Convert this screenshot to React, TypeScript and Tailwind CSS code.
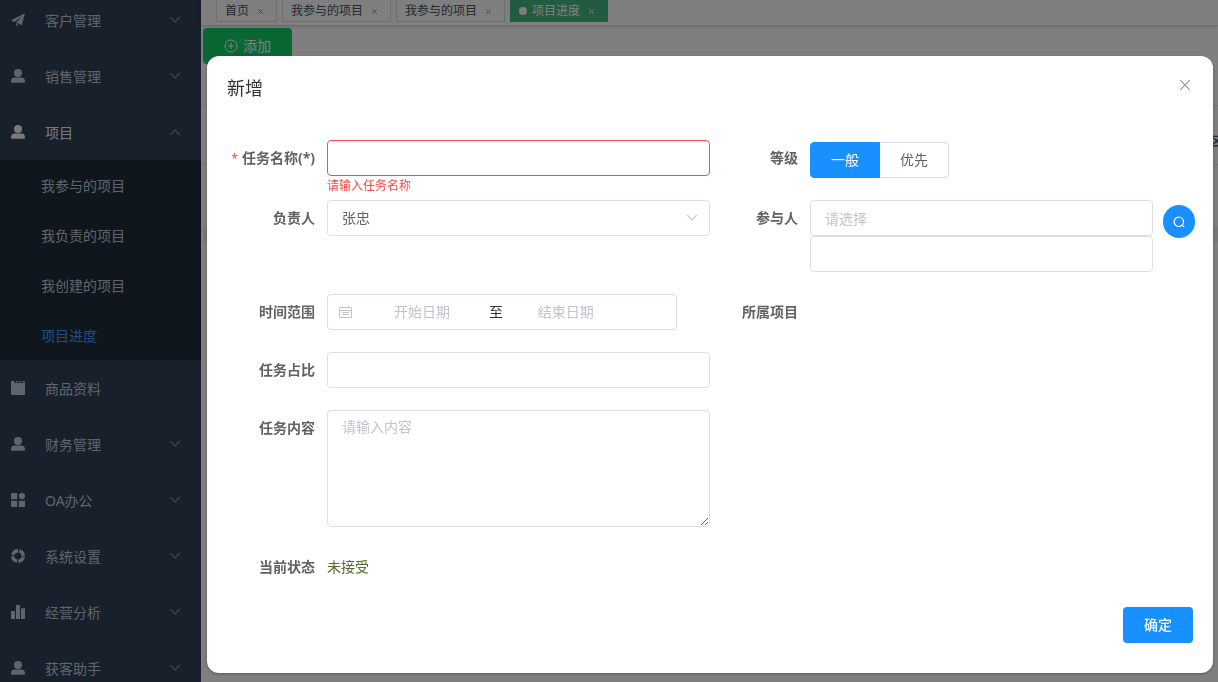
import React, { useState } from 'react';
import clsx from 'clsx';

type IconName = 'promotion' | 'user' | 'goods' | 'menu' | 'help' | 'data';

interface MenuItem {
  label: string;
  icon: IconName;
  leaf?: boolean;
  children?: string[];
}

const menu: MenuItem[] = [
  { label: '客户管理', icon: 'promotion' },
  { label: '销售管理', icon: 'user' },
  { label: '项目', icon: 'user', children: ['我参与的项目', '我负责的项目', '我创建的项目', '项目进度'] },
  { label: '商品资料', icon: 'goods', leaf: true },
  { label: '财务管理', icon: 'user' },
  { label: 'OA办公', icon: 'menu' },
  { label: '系统设置', icon: 'help' },
  { label: '经营分析', icon: 'data' },
  { label: '获客助手', icon: 'user' },
];

const tabs = ['首页', '我参与的项目', '我参与的项目', '项目进度'];

const MenuIcon: React.FC<{ name: IconName }> = ({ name }) => (
  <svg viewBox="0 0 14 14" className="h-3.5 w-3.5 shrink-0" fill="currentColor" aria-hidden="true">
    {name === 'promotion' && (
      <path d="M14 .2 0 7.3l3.6 1.600L11.3 3 5.200 9.600v.1l5.600 2.400L14 .2ZM5.200 10.400v3.100l1.900-2.300-1.900-.8Z" />
    )}
    {name === 'user' && (
      <>
        <circle cx="7" cy="4" r="4" />
        <path d="M3.800 8.600h6.400A3.800 3.800 0 0 1 14 12.400v.4c0 .6-.4 1-1 1H1c-.6 0-1-.4-1-1v-.4a3.800 3.800 0 0 1 3.800-3.800Z" />
      </>
    )}
    {name === 'goods' && (
      <path d="M0 0h3.600v2H14v12H0V0Zm5 0h2v1.200H5V0Zm3.200 0h2v1.200h-2V0Zm3.200 0H14v1.200h-2.600V0Z" />
    )}
    {name === 'menu' && (
      <>
        <rect x="0" y="0" width="6.2" height="6.2" />
        <circle cx="10.9" cy="3.1" r="3.1" />
        <rect x="0" y="7.8" width="6.2" height="6.2" />
        <rect x="7.8" y="7.8" width="6.2" height="6.2" />
      </>
    )}
    {name === 'help' && (
      <circle
        cx="7"
        cy="7"
        r="5.2"
        fill="none"
        stroke="currentColor"
        strokeWidth="3.4"
        strokeDasharray="6.9 1.268"
        strokeDashoffset="-0.634"
      />
    )}
    {name === 'data' && <path d="M0 6h4v8H0V6Zm5-6h4v14H5V0Zm5 3.200h4V14h-4V3.200Z" />}
  </svg>
);

const Chevron: React.FC<{ up?: boolean; className?: string }> = ({ up, className }) => (
  <svg
    viewBox="0 0 12 12"
    className={clsx('h-3 w-3 shrink-0', up && 'rotate-180', className)}
    fill="none"
    stroke="currentColor"
    strokeWidth="1.2"
    aria-hidden="true"
  >
    <path d="m1.300 3.200 4.700 4.700 4.700-4.700" />
  </svg>
);

const Sidebar: React.FC = () => (
  <nav className="w-[201px] shrink-0 overflow-hidden bg-[#304156] text-sm text-[#bfcbd9]">
    {/* the list is scrolled down a little */}
    <ul className="-mt-2">
      {menu.map((item) => (
        <li key={item.label}>
          <button
            type="button"
            className={clsx('flex h-14 w-full items-center pr-5 pl-[11px] text-left', item.children && 'text-[#f4f4f5]')}
          >
            <MenuIcon name={item.icon} />
            <span className="ml-5 flex-1 pt-px">{item.label}</span>
            {!item.leaf && <Chevron up={!!item.children} className="text-[#909399]" />}
          </button>
          {item.children && (
            <ul className="bg-[#1f2d3d]">
              {item.children.map((child) => (
                <li key={child}>
                  <a
                    href="#"
                    className={clsx('flex h-[50px] items-center pt-px pl-[41px]', child === '项目进度' && 'text-[#409eff]')}
                  >
                    {child}
                  </a>
                </li>
              ))}
            </ul>
          )}
        </li>
      ))}
    </ul>
  </nav>
);

const TabBar: React.FC = () => (
  <div className="flex h-[26px] items-start gap-[5px] overflow-hidden border-b border-[#d8dce5] pl-[15px] text-xs shadow">
    {tabs.map((tab, idx) => {
      const active = idx === tabs.length - 1;
      return (
        <div
          key={idx}
          className={clsx(
            'flex h-[22px] shrink-0 items-center border border-t-0 px-2',
            active ? 'border-[#42b983] bg-[#42b983] text-white' : 'border-[#d8dce5] text-[#495060]'
          )}
        >
          {active && <span className="mr-[5px] h-2 w-2 rounded-full bg-white" />}
          <a href="#">{tab}</a>
          <button
            type="button"
            aria-label="关闭标签"
            className={clsx('ml-1 flex w-[15px] justify-center pt-px', !active && 'text-[#909399]')}
          >
            <svg viewBox="0 0 5 5" className="h-[5px] w-[5px]" fill="none" stroke="currentColor" aria-hidden="true">
              <path d="m.3.3 4.400 4.400m0-4.400L.3 4.700" />
            </svg>
          </button>
        </div>
      );
    })}
  </div>
);

interface FormItemProps {
  label: string;
  htmlFor?: string;
  required?: boolean;
  children?: React.ReactNode;
}

const FormItem: React.FC<FormItemProps> = ({ label, htmlFor, required, children }) => (
  <div className="flex min-w-0 items-start">
    <label
      htmlFor={htmlFor}
      className="w-[100px] shrink-0 pr-3 text-right text-sm leading-9 font-bold whitespace-nowrap text-[#606266]"
    >
      {required && <span className="mr-1 text-xs font-normal text-[#ff4949]">*</span>}
      {label}
    </label>
    <div className="min-w-0 flex-1">{children}</div>
  </div>
);

const fieldClass =
  'block h-9 w-full rounded border border-[#dcdfe6] bg-white px-3.5 text-sm text-[#606266] outline-none placeholder:text-[#c0c4cc]';

const TaskDialog: React.FC = () => {
  const [level, setLevel] = useState('一般');

  return (
    <div className="fixed inset-0 overflow-auto bg-black/50 pt-14 pr-[5px] pl-[207px]">
      <form
        role="dialog"
        aria-labelledby="dialog-title"
        className="rounded-xl bg-white px-5 pt-5 pb-[30px] shadow-[0_1px_3px_rgba(0,0,0,0.3)]"
        onSubmit={(e) => e.preventDefault()}
      >
        <div className="flex items-start justify-between pb-2.5">
          <h2 id="dialog-title" className="text-lg leading-6 text-[#303133]">
            新增
          </h2>
          <button type="button" aria-label="关闭" className="flex h-[18px] w-4 items-center justify-center text-[#909399]">
            <svg viewBox="0 0 12 12" className="h-3 w-3" fill="none" stroke="currentColor" strokeWidth="1.1" aria-hidden="true">
              <path d="m1.200 1.200 9.600 9.600M10.800 1.200l-9.600 9.600" />
            </svg>
          </button>
        </div>

        <div className="grid grid-cols-2 gap-y-[22px] pt-[30px]">
          <FormItem label="任务名称(*)" htmlFor="task-name" required>
            <div className="h-[38px]">
              <input
                id="task-name"
                aria-describedby="task-name-error"
                className="block h-9 w-full rounded border border-[#ff4949] bg-white px-3.5 text-sm outline-none"
              />
              <p id="task-name-error" className="text-xs leading-5 text-[#ff4949]">
                请输入任务名称
              </p>
            </div>
          </FormItem>
          <FormItem label="等级">
            <div role="radiogroup" aria-label="等级" className="flex pt-0.5 text-sm">
              {['一般', '优先'].map((item) => (
                <label
                  key={item}
                  className={clsx(
                    'flex h-9 cursor-pointer items-center border px-5 first:rounded-l last:rounded-r last:border-l-0',
                    level === item ? 'border-[#1890ff] bg-[#1890ff] text-white' : 'border-[#dcdfe6] text-[#606266]'
                  )}
                >
                  <input
                    type="radio"
                    name="level"
                    className="sr-only"
                    checked={level === item}
                    onChange={() => setLevel(item)}
                  />
                  {item}
                </label>
              ))}
            </div>
          </FormItem>

          <FormItem label="负责人" htmlFor="owner">
            <div className="relative">
              <select id="owner" className={clsx(fieldClass, 'appearance-none')}>
                <option>张忠</option>
              </select>
              <Chevron className="pointer-events-none absolute top-3 right-3 text-[#c0c4cc]" />
            </div>
          </FormItem>
          <FormItem label="参与人" htmlFor="members">
            <div className="flex items-start gap-2.5">
              <div className="w-[calc(100%-40px)] shrink-0">
                <input id="members" placeholder="请选择" className={fieldClass} />
                <input aria-label="已选参与人" className={fieldClass} />
              </div>
              <button
                type="button"
                aria-label="搜索"
                className="mt-[5px] flex h-[33px] w-8 shrink-0 items-center justify-center rounded-full bg-[#1890ff] text-white"
              >
                <svg viewBox="0 0 12 12" className="h-3 w-3" fill="none" stroke="currentColor" strokeWidth="1.2" aria-hidden="true">
                  <circle cx="5.8" cy="5.8" r="4.7" />
                  <path d="m9 9 2.200 2.200" />
                </svg>
              </button>
            </div>
          </FormItem>

          <FormItem label="时间范围" htmlFor="date-start">
            <div className="flex h-9 w-full max-w-[350px] items-center rounded border border-[#dcdfe6] px-2.5 text-sm">
              <span className="w-5 shrink-0 text-[#c0c4cc]">
                <svg viewBox="0 0 14 14" className="h-3.5 w-3.5" fill="none" stroke="currentColor" aria-hidden="true">
                  <path d="M1.500 2.500h12v10h-12zM1.500 5.500h12M4.500 1v2M10.500 1v2M4 7.500h7M4 9.500h7" />
                </svg>
              </span>
              <input
                id="date-start"
                placeholder="开始日期"
                className="w-[39%] min-w-0 text-center outline-none placeholder:text-[#c0c4cc]"
              />
              <span className="flex w-4 shrink-0 justify-center text-[#303133]">
                <span className="pl-1">至</span>
              </span>
              <input
                aria-label="结束日期"
                placeholder="结束日期"
                className="w-[39%] min-w-0 text-center outline-none placeholder:text-[#c0c4cc]"
              />
            </div>
          </FormItem>
          <FormItem label="所属项目" />

          <FormItem label="任务占比" htmlFor="ratio">
            <input id="ratio" className={fieldClass} />
          </FormItem>

          <div className="col-start-1">
            <FormItem label="任务内容" htmlFor="content">
              <textarea
                id="content"
                placeholder="请输入内容"
                className="block h-[117px] w-full resize-y rounded border border-[#dcdfe6] bg-white px-3.5 py-[5px] text-sm leading-[21px] text-[#606266] outline-none placeholder:text-[#c0c4cc]"
              />
            </FormItem>
          </div>

          <div className="col-start-1">
            <FormItem label="当前状态">
              <span className="text-sm leading-9 text-[#556b2f]">未接受</span>
            </FormItem>
          </div>
        </div>

        <div className="flex justify-end pt-[22px]">
          <button type="submit" className="h-9 rounded bg-[#1890ff] px-[21px] text-sm font-medium text-white">
            确定
          </button>
        </div>
      </form>
    </div>
  );
};

const App: React.FC = () => {
  return (
    <div className="flex h-screen overflow-hidden bg-white font-['Noto_Sans','Noto_Sans_CJK_SC',sans-serif]">
      <Sidebar />
      <main className="min-w-0 flex-1">
        <TabBar />
        <div className="pt-0.5 pl-0.5">
          <button
            type="button"
            className="flex h-9 items-center gap-[5px] rounded bg-[#13ce66] px-[21px] text-sm text-white"
          >
            <svg viewBox="0 0 14 14" className="h-3.5 w-3.5" fill="none" stroke="currentColor" aria-hidden="true">
              <circle cx="7" cy="7" r="6" />
              <path d="M7 4v6M4 7h6" />
            </svg>
            添加
          </button>
          {/* table header, its last column runs past the right edge */}
          <div className="mt-[41px] flex h-[60px] items-end justify-end border-y border-[#dfe6ec] pb-3.5">
            <span className="w-2 overflow-hidden text-xs font-bold whitespace-nowrap text-[#515a6e]">区</span>
          </div>
          <div className="mt-[61px] h-4 bg-[#f0f0f0]" />
        </div>
      </main>
      <TaskDialog />
    </div>
  );
};

export default App;
